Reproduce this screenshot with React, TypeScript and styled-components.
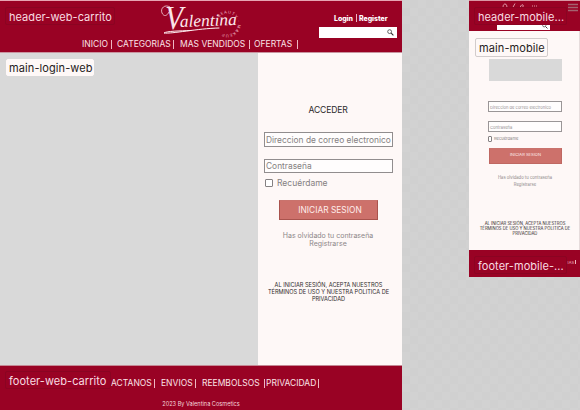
import React from "react";
import styled, { createGlobalStyle } from "styled-components";

const WINE = "#990224";
const BLUSH = "#fef8f7";
const GREY = "#d9d9d9";

const GlobalStyle = createGlobalStyle`
  * { box-sizing: border-box; }
  body { margin: 0; overflow: hidden; font-family: Inter, "Liberation Sans", sans-serif; }
`;

const Canvas = styled.div`
  width: 580px;
  height: 410px;
  overflow: hidden;
  display: flex;
  align-items: flex-start;
  gap: 67px;
  background: repeating-conic-gradient(#d0d0d0 0 25%, #d2d2d2 0 50%) 2px 0 / 16px 16px;
`;

const WebFrame = styled.section`
  position: relative;
  width: 402px;
  height: 410px;
  flex: none;
  display: flex;
  flex-direction: column;
`;

const MobileFrame = styled.section`
  position: relative;
  width: 111px;
  height: 277px;
  flex: none;
  display: flex;
  flex-direction: column;
`;

const Tag = styled.div<{ $x: number; $y: number; $w: number; $h?: number; $light?: boolean; $edge?: boolean }>`
  position: absolute;
  left: ${(p) => p.$x}px;
  top: ${(p) => p.$y}px;
  width: ${(p) => p.$w}px;
  height: ${(p) => p.$h ?? 18}px;
  display: flex;
  align-items: center;
  padding: 1px 0 0 ${(p) => (p.$light ? (p.$edge ? 3 : 2) : 3)}px;
  border-radius: 2px;
  border: 1px solid ${(p) => (p.$light ? (p.$edge ? "#d2cccc" : BLUSH) : "#8a0422")};
  background: ${(p) => (p.$light ? BLUSH : WINE)};
  color: ${(p) => (p.$light ? "#252122" : "#f8dce1")};
  font-size: 11px;
  letter-spacing: ${(p) => (p.$light ? 0.1 : 0.05)}px;
  white-space: nowrap;
`;

const WebHeader = styled.header`
  height: 53px;
  flex: none;
  background: ${WINE};
  border-top: 1px solid #e6a5b2;
  border-bottom: 1px solid #c995a0;
  display: flex;
  flex-direction: column;
`;

const BrandRow = styled.div`
  height: 37px;
  display: flex;
  justify-content: space-between;
  padding: 0 5px 0 159px;
`;

const Account = styled.div`
  width: 78px;
  padding-top: 12px;
`;

const AccountLinks = styled.div`
  height: 10px;
  margin-left: 15px;
  display: flex;
  align-items: center;
  gap: 2px;
  color: #fff;
  font-size: 7px;
  font-weight: 800;
  letter-spacing: -0.05px;
`;

const LoginLink = styled.span`
  width: 20px;
`;

const Bar = styled.i<{ $h?: number }>`
  width: 1px;
  height: ${(p) => p.$h ?? 9}px;
  flex: none;
  background: #eeb6c1;
`;

const Search = styled.div`
  height: 11px;
  margin-top: 4px;
  padding-right: 3px;
  background: #fff;
  display: flex;
  align-items: center;
  justify-content: flex-end;
`;

const Nav = styled.nav<{ $left: number; $h: number }>`
  height: ${(p) => p.$h}px;
  padding-left: ${(p) => p.$left}px;
  display: flex;
  align-items: center;
  color: #fae3e7;
  font-size: 8.5px;
  white-space: nowrap;
`;

const NavItem = styled.span<{ $w: number; $gap?: number }>`
  width: ${(p) => p.$w}px;
  margin-left: ${(p) => p.$gap ?? 0}px;
`;

const WebMain = styled.main`
  height: 312px;
  flex: none;
  display: flex;
`;

const Hero = styled.div`
  width: 258px;
  background: ${GREY};
`;

const LoginPanel = styled.div`
  width: 144px;
  padding: 51px 9px 0 6px;
  background: ${BLUSH};
  display: flex;
  flex-direction: column;
`;

const Title = styled.h1`
  margin: 0;
  height: 12px;
  line-height: 12px;
  padding-right: 1px;
  text-align: center;
  font-size: 8.6px;
  font-weight: 400;
  letter-spacing: -0.15px;
  color: #2c2829;
`;

const Field = styled.div<{ $top: number; $small?: boolean; $h: number }>`
  height: ${(p) => p.$h}px;
  margin-top: ${(p) => p.$top}px;
  padding-left: 1px;
  border: 1px solid ${(p) => (p.$small ? "#9a9697" : "#918d8e")};
  background: #fffdfd;
  color: ${(p) => (p.$small ? "#969192" : "#858182")};
  display: flex;
  align-items: center;
  padding-top: ${(p) => (p.$small ? 1 : 0)}px;
  font-size: ${(p) => (p.$small ? 4.1 : 8.4)}px;
  white-space: nowrap;
`;

const Remember = styled.div<{ $small?: boolean }>`
  height: ${(p) => (p.$small ? 7 : 12)}px;
  margin-top: ${(p) => (p.$small ? 3 : 4)}px;
  padding-left: ${(p) => (p.$small ? 0 : 1)}px;
  display: flex;
  align-items: center;
  gap: ${(p) => (p.$small ? 2 : 4)}px;
  color: #858081;
  font-size: ${(p) => (p.$small ? 4.1 : 8.5)}px;
`;

const Box = styled.span<{ $w: number; $h: number }>`
  width: ${(p) => p.$w}px;
  height: ${(p) => p.$h}px;
  border: 1px solid #858182;
  border-radius: 1px;
  background: #fff;
`;

const Submit = styled.button<{ $small?: boolean }>`
  width: ${(p) => (p.$small ? 73 : 99)}px;
  height: ${(p) => (p.$small ? 16 : 20)}px;
  margin: ${(p) => (p.$small ? "6px 0 0 1px" : "11px 0 0 15px")};
  padding: ${(p) => (p.$small ? "0 0 1px" : "0 0 0 3px")};
  display: flex;
  align-items: center;
  justify-content: center;
  border: 1px solid ${(p) => (p.$small ? "#bf6862" : "#a9534d")};
  border-top-color: #c9736d;
  background: #cd716b;
  color: #ffedeb;
  font-family: inherit;
  font-size: ${(p) => (p.$small ? 4.1 : 8.4)}px;
  line-height: 1;
`;

const Links = styled.div<{ $small?: boolean }>`
  margin-top: ${(p) => (p.$small ? 11 : 12)}px;
  padding-right: ${(p) => (p.$small ? 0 : 1)}px;
  text-align: center;
  color: #8c8788;
  font-size: ${(p) => (p.$small ? 4.2 : 7)}px;
  line-height: ${(p) => (p.$small ? 6.5 : 8)}px;
  white-space: nowrap;
`;

const Terms = styled.p<{ $small?: boolean }>`
  margin: ${(p) => (p.$small ? "33px -12px 0" : "34px -4px 0 -4px")};
  text-align: center;
  color: #2e292a;
  font-size: ${(p) => (p.$small ? 4.2 : 5.6)}px;
  line-height: ${(p) => (p.$small ? 5 : 6.8)}px;
  white-space: nowrap;
`;

const WebFooter = styled.footer`
  height: 45px;
  background: ${WINE};
  border-top: 1px solid #c48894;
`;

const Copyright = styled.div`
  height: 8px;
  line-height: 8px;
  text-align: center;
  color: #f5d5db;
  font-size: 5.6px;
`;

const MobileHeader = styled.header`
  height: 31px;
  flex: none;
  background: ${WINE};
  border-top: 1px solid #d997a4;
  display: flex;
  flex-direction: column;
  justify-content: space-between;
`;

const MobileTop = styled.div`
  height: 12px;
  display: flex;
  justify-content: space-between;
  padding: 2px 2px 0 33px;
`;

const MobileSearch = styled.div`
  width: 53px;
  height: 7px;
  margin: 0 0 1px 28px;
  background: #fff;
  display: flex;
  justify-content: flex-end;
  padding-right: 2px;
`;

const MobileMain = styled.main`
  height: 219px;
  flex: none;
  padding: 28px 17px 0 19px;
  background: ${BLUSH};
  border-right: 1px solid #e6dcdc;
`;

const MobileHero = styled.div`
  width: 73px;
  height: 22px;
  margin-left: 1px;
  background: ${GREY};
`;

const MobileFooter = styled.footer`
  height: 27px;
  padding: 10px 4px 0 0;
  background: ${WINE};
  display: flex;
  align-items: flex-start;
  justify-content: flex-end;
  gap: 1px;
  color: #eebac4;
  font-size: 4px;
`;

const Logo = () => (
  <svg width="84" height="42" viewBox="0 0 84 42" fill="none">
    <text x="6" y="28" fill="#fbe3e8" fontFamily="Liberation Serif, serif" fontStyle="italic" fontSize="33" textLength="18" lengthAdjust="spacingAndGlyphs">V</text>
    <text x="21" y="26" fill="#fdeaee" fontFamily="Liberation Serif, serif" fontStyle="italic" fontSize="17" textLength="57" lengthAdjust="spacingAndGlyphs" transform="rotate(-2 21 26)">alentina</text>
    <path d="M11 6C6 3 1 7 3 12C5 16 8 15 10 11" stroke="#f6d5dc" strokeWidth="0.8" />
    <path d="M32 29.5C20 30 8 30 5 32C13 33 38 27.5 60 27" stroke="#ffeef1" strokeWidth="1" strokeLinecap="round" />
    <path id="seal" d="M60 16.5A10.5 10.5 0 1 1 59 28" />
    <text fill="#f0b8c4" fontFamily="Inter, sans-serif" fontSize="4">
      <textPath href="#seal" textLength="47">BEAUTY · MAKEUP</textPath>
    </text>
  </svg>
);

const LogoCrest = () => (
  <svg width="38" height="8" viewBox="0 0 38 8" fill="none" stroke="#eebcc6" strokeWidth="0.8">
    <path d="M3 6C0 5 1 1 3 1C5 1 5 4 5 6M10 6L13 0.5M18 6C18 3 20 1 21 2C22 3 20 5 19 6" />
    <path d="M30 3L36 3" strokeDasharray="1 1" />
  </svg>
);

const Magnifier = ({ size }: { size: number }) => (
  <svg width={size} height={size} viewBox="0 0 8 8" fill="none" stroke="#292929">
    <circle cx="3" cy="3" r="2.2" strokeWidth="0.8" />
    <path d="M4.8 4.8L7.3 7.3" strokeWidth="1.2" />
  </svg>
);

const MenuIcon = () => (
  <svg width="10" height="9" viewBox="0 0 10 9" stroke="#a5626f" strokeWidth="1.5">
    <path d="M0 1.5H10M0 4.5H10M0 7.5H10" />
  </svg>
);

export default function App() {
  return (
    <>
      <GlobalStyle />
      <Canvas>
        <WebFrame>
          <WebHeader>
            <BrandRow>
              <Logo />
              <Account>
                <AccountLinks>
                  <LoginLink>Login</LoginLink>
                  <Bar $h={8} />
                  <span>Register</span>
                </AccountLinks>
                <Search><Magnifier size={7} /></Search>
              </Account>
            </BrandRow>
            <Nav $left={82} $h={12}>
              <NavItem $w={29}>INICIO</NavItem><Bar />
              <NavItem $w={56} $gap={5}>CATEGORIAS</NavItem><Bar />
              <NavItem $w={69} $gap={6}>MAS VENDIDOS</NavItem><Bar />
              <NavItem $w={43} $gap={4}>OFERTAS</NavItem><Bar />
            </Nav>
          </WebHeader>
          <WebMain>
            <Hero />
            <LoginPanel>
              <Title>ACCEDER</Title>
              <Field $top={16} $h={15}>Direccion de correo electronico</Field>
              <Field $top={12} $h={14}>Contraseña</Field>
              <Remember><Box $w={8} $h={8} />Recuérdame</Remember>
              <Submit>INICIAR SESION</Submit>
              <Links>Has olvidado tu contraseña<br />Registrarse</Links>
              <Terms>AL INICIAR SESIÓN, ACEPTA NUESTROS<br />TÉRMINOS DE USO Y NUESTRA POLITICA DE<br />PRIVACIDAD</Terms>
            </LoginPanel>
          </WebMain>
          <WebFooter>
            <Nav $left={111} $h={34}>
              <NavItem $w={43}>ACTANOS</NavItem><Bar />
              <NavItem $w={34} $gap={6}>ENVIOS</NavItem><Bar />
              <NavItem $w={62} $gap={6}>REEMBOLSOS</NavItem><Bar />
              <NavItem $w={52} $gap={1}>PRIVACIDAD</NavItem><Bar />
            </Nav>
            <Copyright>2023 By Valentina Cosmetics</Copyright>
          </WebFooter>
          <Tag $x={5} $y={7} $w={110}>header-web-carrito</Tag>
          <Tag $x={6} $y={59} $w={88} $h={17} $light>main-login-web</Tag>
          <Tag $x={5} $y={371} $w={106}>footer-web-carrito</Tag>
        </WebFrame>

        <MobileFrame>
          <MobileHeader>
            <MobileTop>
              <LogoCrest />
              <MenuIcon />
            </MobileTop>
            <MobileSearch><Magnifier size={6} /></MobileSearch>
          </MobileHeader>
          <MobileMain>
            <MobileHero />
            <Field $small $top={20} $h={11}>Direccion de correo electronico</Field>
            <Field $small $top={9} $h={11}>Contraseña</Field>
            <Remember $small><Box $w={4} $h={6} />Recuérdame</Remember>
            <Submit $small>INICIAR SESION</Submit>
            <Links $small>Has olvidado tu contraseña<br />Registrarse</Links>
            <Terms $small>AL INICIAR SESIÓN, ACEPTA NUESTROS<br />TÉRMINOS DE USO Y NUESTRA POLITICA DE<br />PRIVACIDAD</Terms>
          </MobileMain>
          <MobileFooter>
            <span>IAS</span><Bar $h={4} />
          </MobileFooter>
          <Tag $x={5} $y={7} $w={93}>header-mobile...</Tag>
          <Tag $x={6} $y={38} $w={73} $h={19} $light $edge>main-mobile</Tag>
          <Tag $x={5} $y={256} $w={93}>footer-mobile-...</Tag>
        </MobileFrame>
      </Canvas>
    </>
  );
}
